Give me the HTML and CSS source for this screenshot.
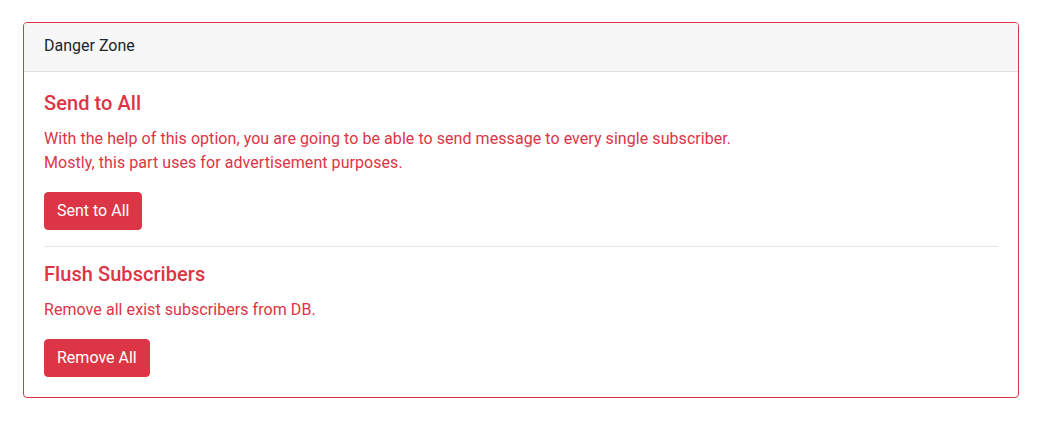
FILE: index.html
```html
<!DOCTYPE html>
<html lang="en">
<head>
<meta charset="utf-8">
<title>Danger Zone</title>
<link rel="stylesheet" href="styles.css">
</head>
<body>
<div class="page">
  <div class="card">
    <div class="card-header">Danger Zone</div>
    <div class="card-body">
      <h5 class="card-title">Send to All</h5>
      <p class="card-text">With the help of this option, you are going to be able to send message to every single subscriber.<br>Mostly, this part uses for advertisement purposes.</p>
      <button class="btn" type="button">Sent to All</button>
      <hr class="divider">
      <h5 class="card-title">Flush Subscribers</h5>
      <p class="card-text">Remove all exist subscribers from DB.</p>
      <button class="btn" type="button">Remove All</button>
    </div>
  </div>
</div>
</body>
</html>
```

FILE: styles.css
```css
* { box-sizing: border-box; }
html, body { margin: 0; padding: 0; }
body {
  font-family: Roboto, "Liberation Sans", sans-serif;
  font-size: 16px;
  line-height: 1.5;
  color: #212529;
  background: #fff;
}
.page {
  padding: 22px 23px;
}
.card {
  border: 1px solid #dc3545;
  border-radius: 4px;
  background: #fff;
}
.card-header {
  padding: 11px 20px 13px;
  background: #f7f7f7;
  border-bottom: 1px solid #dfdfdf;
  border-radius: 3px 3px 0 0;
  color: #212529;
}
.card-body {
  padding: 20px;
  color: #dc3545;
  letter-spacing: 0.06px;
}
.card-title {
  margin: 0 0 12px;
  padding-bottom: 1px;
  margin-top: -1px;
  font-size: 20px;
  font-weight: 500;
  line-height: 1.2;
}
.card-text {
  margin: 0 0 16px;
  padding-bottom: 1px;
  margin-top: -1px;
}
.btn {
  display: inline-block;
  font-family: inherit;
  font-size: 16px;
  line-height: 1.5;
  letter-spacing: 0;
  padding: 6px 12px;
  border: 1px solid #dc3545;
  border-radius: 4px;
  background: #dc3545;
  color: #fff;
  cursor: pointer;
  vertical-align: top;
}
.divider {
  margin: 16px 0;
  border: 0;
  border-top: 1px solid rgba(0,0,0,.1);
  height: 0;
}
```
